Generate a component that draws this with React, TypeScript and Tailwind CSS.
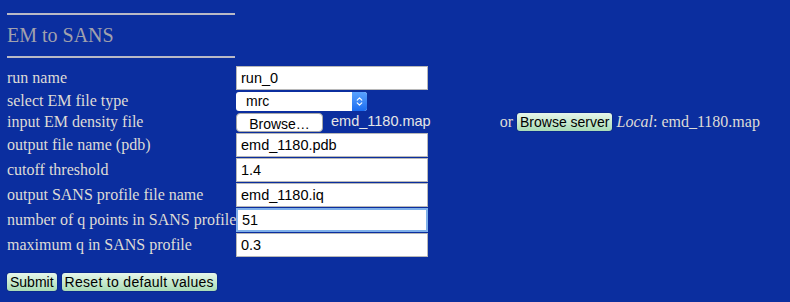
import { ChevronsUpDown } from 'lucide-react'

const serif = { fontFamily: '"Liberation Serif", "Times New Roman", serif' }

function TextField({ value, focused }: { value: string; focused?: boolean }) {
  return (
    <input
      defaultValue={value}
      className={`h-[24px] w-[192px] bg-white px-[4px] text-[14.5px] text-black outline-none font-['Liberation_Sans',Arial,sans-serif] ${
        focused ? 'border-2 border-[#7fb0ea]' : 'border border-[#b8b8b8]'
      }`}
    />
  )
}

function Label({ children }: { children: React.ReactNode }) {
  return <div className="flex items-center whitespace-nowrap text-[16px] leading-[18px] text-[#dedbd6]">{children}</div>
}

function GreenButton({ children }: { children: React.ReactNode }) {
  return (
    <button className="h-[18px] rounded-[3px] bg-gradient-to-b from-[#e6f6ea] to-[#a9dcb6] px-[3px] text-[14px] leading-[18px] text-black shadow-[0_0_1px_#000] font-['Liberation_Sans',Arial,sans-serif]">
      {children}
    </button>
  )
}

export default function App() {
  return (
    <div className="h-[302px] w-[790px] bg-[#0b2e9f] px-[7px] pt-[13px]" style={serif}>
      <div className="w-[228px] border-t-2 border-[#b9b9c6]" />
      <h3 className="mt-[9px] text-[20px] leading-[22px] text-[#a1a1ad]">EM to SANS</h3>
      <div className="mt-[10px] w-[228px] border-t-2 border-[#b9b9c6]" />

      <div className="mt-[8px] grid grid-cols-[229px_auto] gap-y-[1px]">
        <Label>run name</Label>
        <TextField value="run_0" />

        <Label>select EM file type</Label>
        <div className="flex h-[20px] items-center">
          <div className="flex h-[19px] w-[131px] items-center rounded-[3px] bg-white font-['Liberation_Sans',Arial,sans-serif] text-[14px] text-black">
            <span className="flex-1 pl-[10px]">mrc</span>
            <span className="flex h-[19px] w-[15px] items-center justify-center rounded-r-[3px] bg-gradient-to-b from-[#5aa2ff] to-[#1a6cf0]">
              <ChevronsUpDown size={11} color="white" strokeWidth={2.5} />
            </span>
          </div>
        </div>

        <Label>input EM density file</Label>
        <div className="flex h-[20px] items-center">
          <button className="h-[19px] w-[87px] rounded-[4px] border border-[#a8a8a8] bg-white text-[14px] text-black font-['Liberation_Sans',Arial,sans-serif]">
            Browse…
          </button>
          <span className="ml-[8px] text-[14.5px] text-[#e6e6e6] font-['Liberation_Sans',Arial,sans-serif]">emd_1180.map</span>
          <span className="ml-[69px] text-[16px] text-[#dedbd6]">or</span>
          <span className="ml-[4px]">
            <GreenButton>Browse server</GreenButton>
          </span>
          <span className="ml-[4px] text-[16px] text-[#dedbd6]">
            <i>Local</i>: emd_1180.map
          </span>
        </div>

        <Label>output file name (pdb)</Label>
        <TextField value="emd_1180.pdb" />

        <Label>cutoff threshold</Label>
        <TextField value="1.4" />

        <Label>output SANS profile file name</Label>
        <TextField value="emd_1180.iq" />

        <Label>number of q points in SANS profile</Label>
        <TextField value="51" focused />

        <Label>maximum q in SANS profile</Label>
        <TextField value="0.3" />
      </div>

      <div className="mt-[16px] flex gap-[5px]">
        <GreenButton>Submit</GreenButton>
        <GreenButton>
          <span className="tracking-[0.3px]">Reset to default values</span>
        </GreenButton>
      </div>
    </div>
  )
}
